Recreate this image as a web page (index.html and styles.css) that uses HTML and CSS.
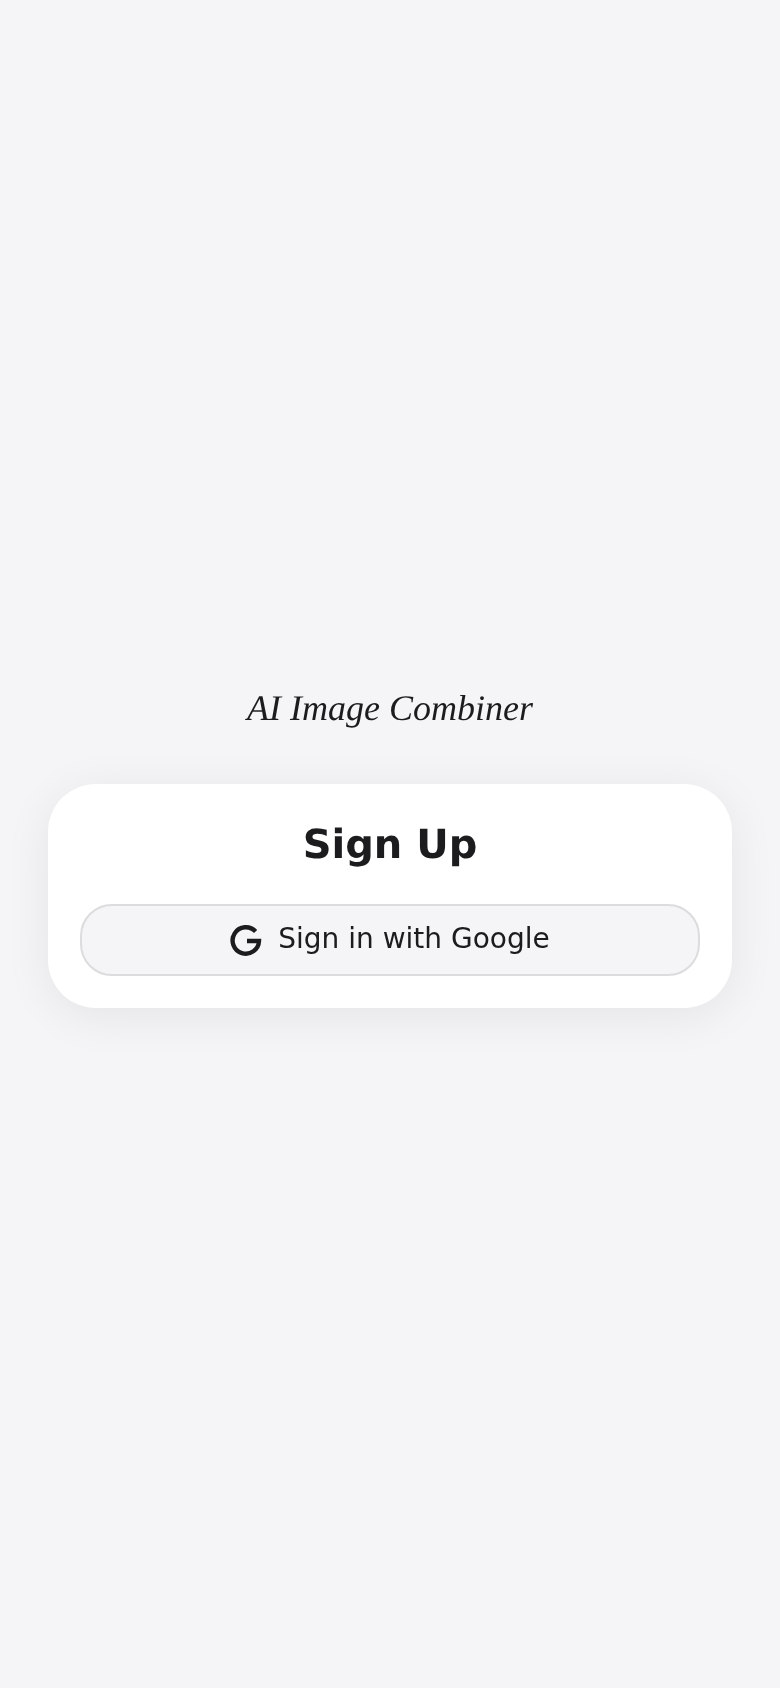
FILE: index.html
```html
<!DOCTYPE html>
<html lang="en">
<head>
    <meta charset="UTF-8">
    <meta name="viewport" content="width=device-width, initial-scale=1.0">
    <title>AI Image Combiner</title>
    <link rel="stylesheet" href="styles.css">
</head>
<body>
    <main class="auth-page">
        <h1 class="app-title">AI Image Combiner</h1>

        <section class="auth-card">
            <h2>Sign Up</h2>
            <button class="btn-google" type="button">
                <svg class="google-icon" viewBox="0 0 32 32" aria-hidden="true">
                    <path d="M25.6 7.6A13.2 13.2 0 1 0 29 17H17" fill="none" stroke="currentColor" stroke-width="4.4"/>
                </svg>
                <span class="btn-label">Sign in with Google</span>
            </button>
        </section>
    </main>
</body>
</html>
```

FILE: styles.css
```css
* {
    margin: 0;
    padding: 0;
    box-sizing: border-box;
}

body {
    font-family: 'DejaVu Sans', sans-serif;
    background: #f5f5f7;
    color: #1c1c1e;
    text-rendering: geometricPrecision;
}

.auth-page {
    height: 100vh;
    display: flex;
    flex-direction: column;
    justify-content: center;
    padding: 0 48px;
    will-change: transform;
}

.app-title {
    font-family: 'Liberation Serif', serif;
    font-size: 36px;
    font-style: italic;
    font-weight: 400;
    line-height: 56px;
    text-align: center;
    margin-bottom: 48px;
}

.auth-card {
    background: white;
    border-radius: 48px;
    padding: 32px;
    box-shadow: 0 8px 48px rgba(0, 0, 0, 0.07);
}

.auth-card h2 {
    font-size: 40px;
    font-weight: 700;
    line-height: 58px;
    text-align: center;
    margin-bottom: 30px;
}

.btn-google {
    width: 100%;
    height: 72px;
    display: flex;
    align-items: center;
    justify-content: center;
    gap: 16px;
    background: #f5f5f7;
    border: 2px solid #dcdcde;
    border-radius: 32px;
    color: #1c1c1e;
    font-family: inherit;
    font-size: 28px;
    cursor: pointer;
}

.btn-label {
    margin-bottom: 4px;
}

.google-icon {
    width: 32px;
    height: 32px;
}
```
